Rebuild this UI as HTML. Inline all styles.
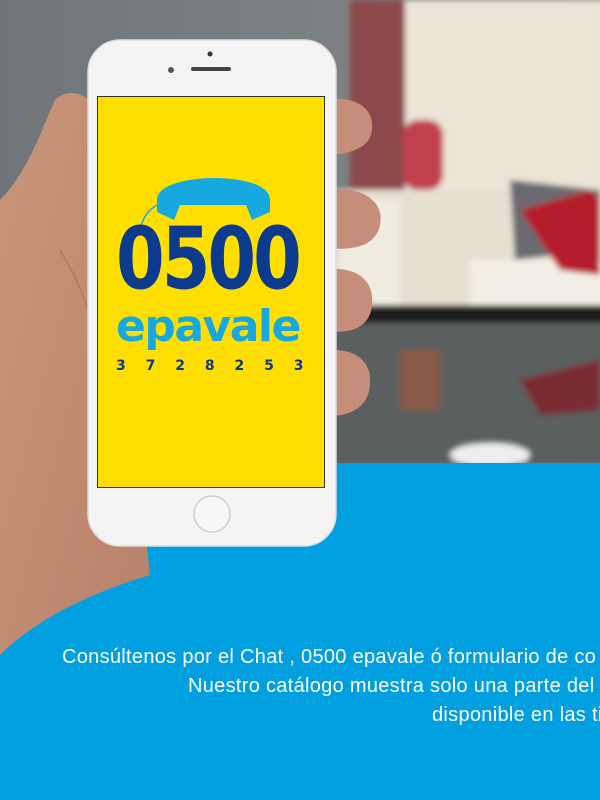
<!DOCTYPE html>
<html><head><meta charset="utf-8"><style>
html,body{margin:0;padding:0}
body{width:600px;height:800px;overflow:hidden;position:relative;background:#009fe0;font-family:"Liberation Sans",sans-serif}
.t{position:absolute;color:#fff;font-size:20px;white-space:nowrap;letter-spacing:0.3px}
</style></head><body>
<svg width="600" height="800" style="position:absolute;left:0;top:0">
<defs>
<filter id="b" x="-10%" y="-10%" width="120%" height="120%"><feGaussianBlur stdDeviation="3"/></filter>
<linearGradient id="gw" x1="0" y1="0" x2="1" y2="0"><stop offset="0" stop-color="#6f7579"/><stop offset="1" stop-color="#858a8c"/></linearGradient>
<linearGradient id="sk" x1="0" y1="0" x2="1" y2="1"><stop offset="0" stop-color="#c9957a"/><stop offset="1" stop-color="#b8826a"/></linearGradient>
</defs>
<rect x="0" y="0" width="600" height="465" fill="url(#gw)"/>
<g filter="url(#b)">
<rect x="350" y="0" width="60" height="200" fill="#8c4a4c"/>
<rect x="405" y="0" width="200" height="200" fill="#ece4d6"/>
<rect x="330" y="190" width="280" height="130" fill="#e6e0d2"/>
<rect x="340" y="200" width="60" height="110" fill="#f1ece2"/>
<rect x="470" y="260" width="140" height="60" fill="#f3efe6"/>
<path d="M510 180 L600 190 L600 250 L515 260 Z" fill="#6a6a70"/>
<path d="M520 210 L590 190 L600 200 L600 275 L560 270 Z" fill="#b51c2a"/>
<rect x="403" y="120" width="40" height="70" rx="15" fill="#c0404e"/>
<rect x="320" y="310" width="290" height="155" fill="#5a5e5e"/>
<rect x="320" y="305" width="290" height="18" fill="#1a1a1a"/>
<rect x="400" y="350" width="40" height="60" fill="#8a5a4a"/>
<path d="M520 380 L600 360 L600 410 L540 415 Z" fill="#7a2a30"/>
<ellipse cx="490" cy="455" rx="40" ry="12" fill="#eee"/>
</g>
<rect x="0" y="463" width="600" height="337" fill="#009fe0"/>
<path d="M0 200 C30 170 45 120 55 100 C70 85 95 95 100 120 L150 575 C100 590 40 615 0 655 Z" fill="url(#sk)"/>
<path d="M60 250 C90 300 100 340 100 380" stroke="#a87058" stroke-width="2" fill="none" opacity=".5"/>
<path d="M325 100 C350 95 375 105 372 130 C370 150 345 155 325 155 Z" fill="#c58d7a"/>
<path d="M325 190 C360 185 385 200 380 225 C375 250 345 250 325 248 Z" fill="#c58d7a"/>
<path d="M325 270 C355 265 375 280 372 305 C370 330 345 335 325 330 Z" fill="#c58d7a"/>
<path d="M325 350 C355 348 372 360 370 385 C368 410 345 418 325 415 Z" fill="#c58d7a"/>
<rect x="88" y="40" width="248" height="506" rx="32" fill="#f4f4f4" stroke="#dcdcdc" stroke-width="1.5"/>
<rect x="97" y="96" width="228" height="392" fill="#333"/>
<rect x="98" y="97" width="226" height="390" fill="#ffdf00"/>
<circle cx="210" cy="54" r="2.5" fill="#333"/>
<circle cx="171" cy="70" r="3" fill="#555"/>
<rect x="191" y="67" width="40" height="4" rx="2" fill="#444"/>
<circle cx="212" cy="514" r="18" fill="#f8f8f8" stroke="#cfcfcf" stroke-width="1.5"/>
<path d="M157 200 C157 184 190 178 214 178 C240 178 270 184 270 200 L270 212 L252 220 L246 205 L180 205 L174 220 L157 212 Z" fill="#17a8e0"/>
<path d="M157 205 C148 210 141 220 140 232" stroke="#17a8e0" stroke-width="1.5" fill="none"/>
</svg>
<div style="position:absolute;left:116px;top:214px;font-family:'DejaVu Sans',sans-serif;font-weight:bold;font-size:70px;color:#0c3a8c;letter-spacing:-3px;line-height:90px;transform:scaleY(1.22);transform-origin:0 50%">0500</div>
<div style="position:absolute;left:116px;top:302px;font-family:'DejaVu Sans',sans-serif;font-weight:bold;font-size:44px;color:#17a8e0;letter-spacing:-1.5px;line-height:50px">epavale</div>
<div style="position:absolute;left:116px;top:357px;font-family:'DejaVu Sans',sans-serif;font-weight:bold;font-size:14px;color:#0c3a8c;word-spacing:15px;line-height:18px">3 7 2 8 2 5 3</div>
<div class="t" style="left:62px;top:646px">Consúltenos por el Chat , 0500 epavale ó formulario de co</div>
<div class="t" style="left:188px;top:675px">Nuestro catálogo muestra solo una parte del</div>
<div class="t" style="left:432px;top:704px">disponible en las ti</div>
</body></html>
